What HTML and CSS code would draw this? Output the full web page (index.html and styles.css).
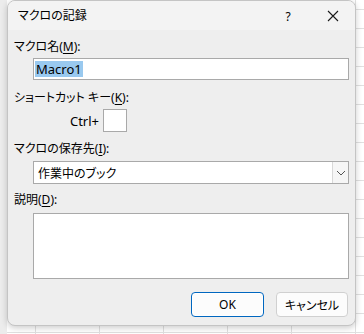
FILE: index.html
```html
<!DOCTYPE html>
<html lang="ja">
<head>
<meta charset="utf-8">
<title>マクロの記録</title>
<link rel="stylesheet" href="styles.css">
</head>
<body>
<div class="desk">
  <div class="dialog">
    <div class="titlebar">
      <span class="title">マクロの記録</span>
      <span class="help">?</span>
      <span class="close"><svg width="12" height="12" viewBox="0 0 12 12"><path d="M1 1L11 11M11 1L1 11" stroke="#1a1a1a" stroke-width="1.1" fill="none"/></svg></span>
    </div>
    <div class="content">
      <div class="label l1">マクロ名(<u>M</u>):</div>
      <div class="field input"><span class="sel">Macro1</span></div>
      <div class="label l2">ショートカット キー(<u>K</u>):</div>
      <div class="ctrlrow"><span class="ctrl">Ctrl+</span><span class="keybox"></span></div>
      <div class="label l3">マクロの保存先(<u>I</u>):</div>
      <div class="field select"><span class="seltext">作業中のブック</span><span class="drop"><svg width="10" height="6" viewBox="0 0 10 6"><path d="M1 1L5 5L9 1" stroke="#555" stroke-width="1" fill="none"/></svg></span></div>
      <div class="label l4">説明(<u>D</u>):</div>
      <div class="field textarea"></div>
      <div class="buttons">
        <div class="btn ok">OK</div>
        <div class="btn cancel">キャンセル</div>
      </div>
    </div>
  </div>
</div>
</body>
</html>
```
FILE: styles.css
```css
* { box-sizing: border-box; }
html, body { margin: 0; padding: 0; }
body {
  width: 364px;
  height: 334px;
  overflow: hidden;
  font-family: "Noto Sans", "Noto Sans CJK JP", sans-serif;
  font-feature-settings: "palt";
  font-size: 12px;
  color: #000;
  background-color: #ffffff;
  background-image:
    linear-gradient(to bottom, #e0e0e0 1px, transparent 1px),
    linear-gradient(to right, #e0e0e0 1px, transparent 1px);
  background-size: 100% 19px, 64px 100%;
  background-position: 0 9px, 35px 0;
}
.desk {
  padding-left: 7px;
  height: 334px;
  background: linear-gradient(to right, #ececec 0, #ececec 7px, transparent 7px);
}
.dialog {
  width: 349px;
  height: 326px;
  background: #eeeeee;
  border: 1px solid #c4c4c4;
  border-radius: 8px;
  box-shadow: 0 2px 6px rgba(0,0,0,0.2);
  display: flex;
  flex-direction: column;
  overflow: hidden;
}
.titlebar {
  height: 29px;
  background: #f3f3f3;
  display: flex;
  align-items: center;
  padding-left: 10px;
}
.title { flex: 1; font-size: 12px; line-height: 16px; padding-top: 1px; }
.help { width: 14px; text-align: center; font-size: 12px; margin-right: 32px; padding-top: 1px; }
.close { width: 12px; height: 12px; display: flex; margin-right: 16px; }
.content {
  padding: 0 6px 0 6px;
  display: flex;
  flex-direction: column;
}
.label { line-height: 16px; height: 16px; white-space: nowrap; }
.label u { text-underline-offset: 2px; }
.l1 { margin-top: 9px; }
.l2 { margin-top: 10px; }
.l3 { margin-top: 9px; }
.l4 { margin-top: 8px; }
.field {
  margin-left: 19px;
  background: #fff;
  border: 1px solid #a9a9a9;
}
.input {
  margin-top: 3px;
  height: 22px;
  display: flex;
  align-items: center;
  padding-left: 1px;
  font-size: 13px;
}
.sel { background: #99c9ef; line-height: 16px; padding: 0 1px; }
.ctrlrow {
  margin-top: 3px;
  height: 23px;
  display: flex;
  align-items: center;
  padding-left: 55px;
}
.ctrl { font-size: 13px; width: 34px; text-align: right; padding-right: 4px; }
.keybox {
  width: 24px;
  height: 23px;
  background: #fff;
  border: 1px solid #a9a9a9;
}
.select {
  margin-top: 4px;
  height: 23px;
  display: flex;
  align-items: center;
}
.seltext { flex: 1; padding-left: 4px; font-size: 12px; }
.drop {
  width: 16px;
  height: 21px;
  background: #f6f6f6;
  border-left: 1px solid #d8d8d8;
  display: flex;
  align-items: center;
  justify-content: center;
}
.textarea { margin-top: 5px; height: 66px; }
.buttons {
  margin-top: 13px;
  display: flex;
  justify-content: flex-end;
  gap: 12px;
  padding-right: 1px;
}
.btn {
  height: 25px;
  border-radius: 4px;
  background: #fcfcfc;
  display: flex;
  align-items: center;
  justify-content: center;
  font-size: 12px;
}
.ok { width: 73px; border: 1px solid #0067c0; box-shadow: inset 0 0 0 1px #ffffff; }
.cancel { width: 72px; border: 1px solid #d0d0d0; }
```
